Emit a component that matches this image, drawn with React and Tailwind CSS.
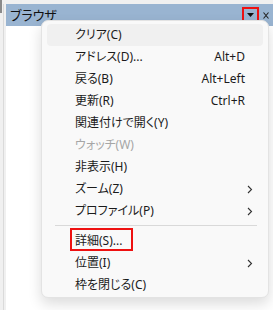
const items = [
    { label: 'クリア(C)', hover: true },
    { label: 'アドレス(D)...', shortcut: 'Alt+D' },
    { label: '戻る(B)', shortcut: 'Alt+Left' },
    { label: '更新(R)', shortcut: 'Ctrl+R' },
    { label: '関連付けで開く(Y)' },
    { label: 'ウォッチ(W)', disabled: true },
    { label: '非表示(H)' },
    { label: 'ズーム(Z)', sub: true },
    { label: 'プロファイル(P)', sub: true },
    { sep: true },
    { label: '詳細(S)...', marked: true },
    { label: '位置(I)', sub: true },
    { label: '枠を閉じる(C)' },
];

const Chevron = () => (
    <svg width="6" height="9" viewBox="0 0 6 9" className="absolute right-[10px] top-[7px]">
        <path d="M1 1 L4.5 4.5 L1 8" fill="none" stroke="#333" strokeWidth="1.1" />
    </svg>
);

const MenuItem = ({ item }) => {
    if (item.sep) {
        return <div className="h-px bg-[#d9d9d9] ml-[8px] mr-[6px] mt-[3px] mb-[4px]" />;
    }
    return (
        <div className={`relative h-[22px] flex items-center pl-[28px] pr-[18px] rounded-[4px] ${item.hover ? 'bg-[#f0f0f0]' : ''}`}>
            <span className={item.disabled ? 'text-[#a6a6a6]' : 'text-[#1b1b1b]'}>{item.label}</span>
            {item.shortcut && <span className="ml-auto text-[#1b1b1b]">{item.shortcut}</span>}
            {item.sub && <Chevron />}
            {/* annotation box */}
            {item.marked && (
                <div className="absolute left-[23px] top-[-2px] w-[63px] h-[23px] border-2 border-[#ee1111]" />
            )}
        </div>
    );
};

const App = () => {
    return (
        <div className="relative w-[273px] h-[310px] bg-white overflow-hidden text-[12px] leading-none [font-family:'Noto_Sans','Noto_Sans_CJK_JP',sans-serif] [font-feature-settings:'palt']">
            {/* top strip */}
            <div className="h-[4px] bg-[#f0f0f0] flex">
                <div className="w-[2px] h-full bg-[#8a8a8a]" />
            </div>
            <div className="flex h-[306px]">
                {/* left edge */}
                <div className="w-[6px] flex bg-[#f0f0f0]">
                    <div className="w-[2px] h-[9px] bg-[#8a8a8a]" />
                    <div className="ml-[1px] w-px bg-[#dadada]" />
                </div>
                <div className="flex-1 flex flex-col">
                    {/* header */}
                    <div className="h-[22px] bg-[#99b4d1] flex items-center pl-[4px] pr-[4px]">
                        <span className="text-[13px] text-[#111]">ブラウザ</span>
                        <div className="ml-auto w-[17px] h-[17px] border-2 border-[#ee1111] flex items-center justify-center">
                            <svg width="7" height="4" viewBox="0 0 7 4"><path d="M0 0 H7 L3.5 4 Z" fill="#111" /></svg>
                        </div>
                        <svg width="6" height="7" viewBox="0 0 6 7" className="ml-[4px]">
                            <path d="M0.5 0.5 L5.5 6.5 M5.5 0.5 L0.5 6.5" stroke="#222" strokeWidth="1.1" />
                        </svg>
                    </div>
                    <div className="flex-1 bg-white" />
                </div>
            </div>

            {/* dropdown menu */}
            <div className="absolute left-[41px] top-[20px] w-[228px] bg-[#f9f9f9] border border-[#e3e3e3] rounded-[7px] shadow-[0_6px_14px_rgba(0,0,0,0.14)] px-[5px] pt-[3px] pb-[1px]">
                {items.map((item, i) => (
                    <MenuItem key={i} item={item} />
                ))}
            </div>
        </div>
    );
};

export default App;
